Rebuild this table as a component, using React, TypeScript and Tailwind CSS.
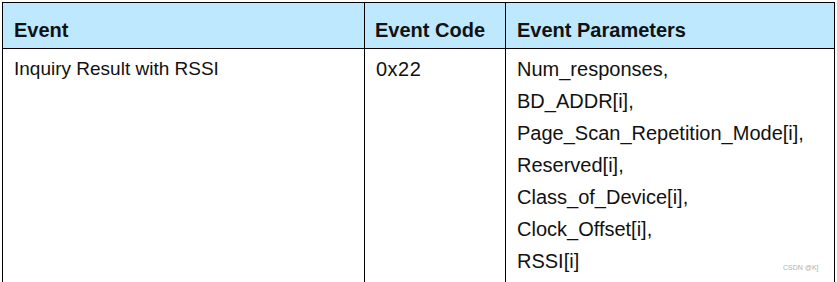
const params = [
  "Num_responses,",
  "BD_ADDR[i],",
  "Page_Scan_Repetition_Mode[i],",
  "Reserved[i],",
  "Class_of_Device[i],",
  "Clock_Offset[i],",
  "RSSI[i]",
];

const App = () => {
  return (
    <div className="relative h-[282px] w-[837px] overflow-hidden bg-white pl-[2px] pt-[2px] font-['Liberation_Sans',Arial,sans-serif] text-[19px] leading-[32px] text-[#111]">
      <div className="grid w-[833px] grid-cols-[362px_141px_1fr] border border-black">
        {/* header row */}
        <div className="border-b border-r border-black bg-[#bde8fd] pb-[2px] pl-[11px] pt-[11px] text-[20px] font-bold">
          Event
        </div>
        <div className="border-b border-r border-black bg-[#bde8fd] pb-[2px] pl-[10px] pt-[11px] text-[20px] font-bold">
          Event Code
        </div>
        <div className="border-b border-black bg-[#bde8fd] pb-[2px] pl-[11px] pt-[11px] text-[20px] font-bold">
          Event Parameters
        </div>

        {/* data row */}
        <div className="border-r border-black pl-[11px] pt-[4px]">
          Inquiry Result with RSSI
        </div>
        <div className="border-r border-black pl-[11px] pt-[4px] text-[20px] tracking-[0.5px]">
          0x22
        </div>
        <div className="flex flex-col pb-[12px] pl-[11px] pt-[4px] text-[20px]">
          {params.map((p) => (
            <span key={p}>{p}</span>
          ))}
        </div>
      </div>
      <span className="absolute left-[783px] top-[263px] text-[7px] leading-[10px] text-[#b0b0b0]">
        CSDN @K]
      </span>
    </div>
  );
};

export default App;
